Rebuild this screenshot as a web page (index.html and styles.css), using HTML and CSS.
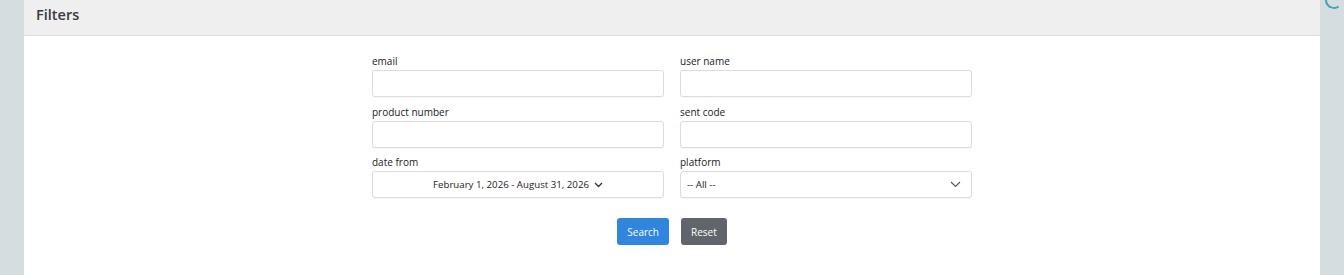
FILE: index.html
```html
<!DOCTYPE html>
<html>
<head>
    <title>Filters</title>
    <link rel="stylesheet" href="styles.css">
</head>
<body>
    <div class="spinner"></div>
    <div class="card">
        <div class="card-header">Filters</div>
        <div class="card-body">
            <form class="filters">
                <div class="field">
                    <label>email</label>
                    <input type="text" class="input">
                </div>
                <div class="field">
                    <label>user name</label>
                    <input type="text" class="input">
                </div>
                <div class="field">
                    <label>product number</label>
                    <input type="text" class="input">
                </div>
                <div class="field">
                    <label>sent code</label>
                    <input type="text" class="input">
                </div>
                <div class="field">
                    <label>date from</label>
                    <div class="input range">
                        <span>February 1, 2026 - August 31, 2026</span>
                        <svg width="9" height="6" viewBox="0 0 9 6"><path d="M1 1l3.5 3.5L8 1" fill="none" stroke="#333" stroke-width="1.3"/></svg>
                    </div>
                </div>
                <div class="field">
                    <label>platform</label>
                    <div class="input select">
                        <span>-- All --</span>
                        <svg width="11" height="7" viewBox="0 0 11 7"><path d="M1 1l4.5 4.5L10 1" fill="none" stroke="#555" stroke-width="1.1"/></svg>
                    </div>
                </div>
            </form>
            <div class="actions">
                <button class="btn btn-primary">Search</button>
                <button class="btn btn-secondary">Reset</button>
            </div>
        </div>
    </div>
</body>
</html>
```

FILE: styles.css
```css
body {
    margin: 0;
    background-color: #d5dde1;
    font-family: "Open Sans", "Noto Sans", sans-serif;
    color: #333;
}
.spinner {
    position: absolute;
    top: -9px;
    left: 1325px;
    width: 14px;
    height: 14px;
    border: 2px solid transparent;
    border-left-color: #3ba9ad;
    border-bottom-color: #3ba9ad;
    border-radius: 50%;
    transform: rotate(10deg);
}
.card {
    margin-left: 24px;
    width: 1296px;
    height: 275px;
    background-color: #fff;
}
.card-header {
    height: 36px;
    box-sizing: border-box;
    padding: 5px 12px 0;
    background-color: #efefef;
    border-bottom: 1px solid #dedede;
    font-size: 14.5px;
    font-weight: 600;
    color: #3a3a3a;
}
.card-body {
    padding-top: 18px;
}
.filters {
    width: 600px;
    margin: 0 auto;
    display: grid;
    grid-template-columns: 292px 292px;
    column-gap: 16px;
    row-gap: 7.5px;
}
.field label {
    display: block;
    font-size: 10px;
    line-height: 14px;
    margin-bottom: 2px;
    color: #222;
}
.input {
    display: block;
    width: 100%;
    height: 27px;
    box-sizing: border-box;
    margin: 0;
    border: 1px solid #dcdcdc;
    border-radius: 3px;
    background-color: #fff;
    font-family: inherit;
    font-size: 9.7px;
    color: #222;
    box-shadow: 0 1px 1px rgba(0, 0, 0, 0.03);
}
.range {
    display: flex;
    align-items: center;
    justify-content: center;
    gap: 5px;
}
.select {
    display: flex;
    align-items: center;
    justify-content: space-between;
    padding: 0 10px 0 6px;
}
.actions {
    display: flex;
    justify-content: center;
    gap: 12px;
    margin-top: 20px;
}
.btn {
    height: 27px;
    border: none;
    border-radius: 3px;
    padding: 0 10px;
    font-family: inherit;
    font-size: 10px;
    color: #fff;
}
.btn-primary {
    background-color: #2f86e0;
}
.btn-secondary {
    background-color: #5f656b;
}
```
